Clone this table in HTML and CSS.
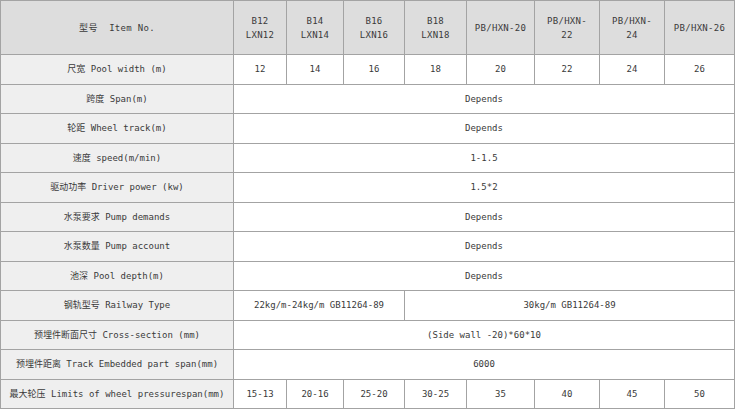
FILE: index.html
```html
<!DOCTYPE html>
<html>
<head>
<meta charset="utf-8">
<link rel="stylesheet" href="styles.css">
</head>
<body>
<table class="spec">
  <colgroup>
    <col class="c0"><col class="c1"><col class="c2"><col class="c3"><col class="c4"><col class="c5"><col class="c6"><col class="c7"><col class="c8">
  </colgroup>
  <tr class="head">
    <th class="label">型号&nbsp; Item No.</th>
    <th>B12<br>LXN12</th>
    <th>B14<br>LXN14</th>
    <th>B16<br>LXN16</th>
    <th>B18<br>LXN18</th>
    <th>PB/HXN-20</th>
    <th>PB/HXN-<br>22</th>
    <th>PB/HXN-<br>24</th>
    <th>PB/HXN-26</th>
  </tr>
  <tr>
    <td class="label">尺宽 Pool width (m)</td>
    <td>12</td><td>14</td><td>16</td><td>18</td><td>20</td><td>22</td><td>24</td><td>26</td>
  </tr>
  <tr><td class="label">跨度 Span(m)</td><td colspan="8">Depends</td></tr>
  <tr><td class="label">轮距 Wheel track(m)</td><td colspan="8">Depends</td></tr>
  <tr><td class="label">速度 speed(m/min)</td><td colspan="8">1-1.5</td></tr>
  <tr><td class="label">驱动功率 Driver power (kw)</td><td colspan="8">1.5*2</td></tr>
  <tr><td class="label">水泵要求 Pump demands</td><td colspan="8">Depends</td></tr>
  <tr><td class="label">水泵数量 Pump account</td><td colspan="8">Depends</td></tr>
  <tr><td class="label">池深 Pool depth(m)</td><td colspan="8">Depends</td></tr>
  <tr>
    <td class="label">钢轨型号 Railway Type</td>
    <td colspan="3">22kg/m-24kg/m GB11264-89</td>
    <td colspan="5">30kg/m GB11264-89</td>
  </tr>
  <tr><td class="label">预埋件断面尺寸 Cross-section (mm)</td><td colspan="8">(Side wall -20)*60*10</td></tr>
  <tr><td class="label">预埋件距离 Track Embedded part span(mm)</td><td colspan="8">6000</td></tr>
  <tr>
    <td class="label">最大轮压 Limits of wheel pressurespan(mm)</td>
    <td>15-13</td><td>20-16</td><td>25-20</td><td>30-25</td><td>35</td><td>40</td><td>45</td><td>50</td>
  </tr>
</table>
</body>
</html>
```

FILE: styles.css
```css
html, body {
  margin: 0;
  padding: 0;
  background: #ffffff;
}

.spec {
  border-collapse: collapse;
  table-layout: fixed;
  width: 734px;
  font-family: "DejaVu Sans Mono", "Noto Sans CJK SC", monospace;
  font-size: 9px;
  color: #3a3a3a;
}

.c0 { width: 233px; }
.c1 { width: 53px; }
.c2 { width: 57px; }
.c3 { width: 61px; }
.c4 { width: 62px; }
.c5 { width: 68px; }
.c6 { width: 65px; }
.c7 { width: 65px; }
.c8 { width: 70px; }

.spec th,
.spec td {
  border: 1px solid #a3a3a3;
  text-align: center;
  vertical-align: middle;
  padding: 0;
  font-weight: normal;
  line-height: 14px;
  white-space: nowrap;
}

.spec tr {
  height: 29.5px;
}

.spec tr.head {
  height: 54px;
}

.spec tr.head th {
  background: #dddddd;
  letter-spacing: 0.3px;
}

.spec td.label {
  background: #efefef;
}
```
